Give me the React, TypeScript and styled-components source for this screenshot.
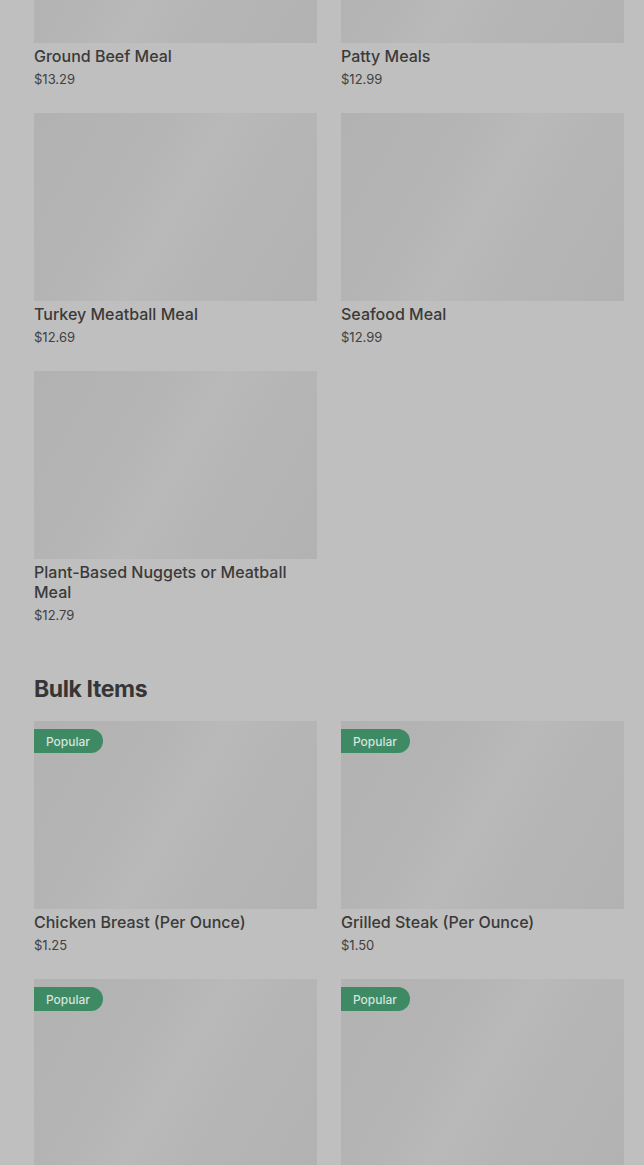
import React from 'react';
import styled, { createGlobalStyle } from 'styled-components';

interface Item {
    name: string;
    price: string;
    popular?: boolean;
}

const meals: Item[] = [
    { name: 'Ground Beef Meal', price: '$13.29' },
    { name: 'Patty Meals', price: '$12.99' },
    { name: 'Turkey Meatball Meal', price: '$12.69' },
    { name: 'Seafood Meal', price: '$12.99' },
    { name: 'Plant-Based Nuggets or Meatball Meal', price: '$12.79' },
];

const bulk: Item[] = [
    { name: 'Chicken Breast (Per Ounce)', price: '$1.25', popular: true },
    { name: 'Grilled Steak (Per Ounce)', price: '$1.50', popular: true },
    { name: 'Ground Turkey (Per Ounce)', price: '$1.25', popular: true },
    { name: 'Salmon (Per Ounce)', price: '$2.25', popular: true },
];

const GlobalStyle = createGlobalStyle`
    html, body {
        margin: 0;
        padding: 0;
        background: #bfbfbf;
        overflow: hidden;
    }
    body {
        font-family: Inter, "Noto Sans", sans-serif;
    }
`;

const Page = styled.div`
    height: 1165px;
    overflow: hidden;
`;

// the menu is scrolled part way down
const Scroller = styled.div`
    margin-top: -145px;
    padding: 0 20px 0 34px;
`;

const Section = styled.section`
    display: flex;
    flex-direction: column;
    padding-bottom: 51px;
`;

const SectionTitle = styled.h2`
    margin: 0 0 18px;
    font-size: 23px;
    line-height: 28px;
    font-weight: 700;
    letter-spacing: -0.4px;
    color: #363636;
`;

const Grid = styled.div`
    display: grid;
    grid-template-columns: 1fr 1fr;
    column-gap: 24px;
    row-gap: 25px;
`;

const Card = styled.div`
    display: flex;
    flex-direction: column;
`;

const Photo = styled.div`
    position: relative;
    height: 188px;
    background: linear-gradient(
        120deg,
        #b2b2b2 0%,
        #b4b4b4 30%,
        #b9b9b9 50%,
        #b5b5b5 70%,
        #b2b2b2 100%
    );
`;

const Badge = styled.span`
    position: absolute;
    top: 8px;
    left: 0;
    height: 24px;
    padding: 0 13px 0 12px;
    display: flex;
    align-items: center;
    border-radius: 0 12px 12px 0;
    background: #3d8a65;
    color: #d6e4dc;
    font-size: 12px;
    font-weight: 500;
`;

const Name = styled.div`
    margin-top: 3px;
    font-size: 16px;
    line-height: 20px;
    font-weight: 500;
    color: #3a3a3a;
`;

const Price = styled.div`
    margin-top: 4px;
    font-size: 13px;
    line-height: 18px;
    color: #414141;
`;

function ItemCard({ item }: { item: Item }) {
    return (
        <Card>
            <Photo>{item.popular && <Badge>Popular</Badge>}</Photo>
            <Name>{item.name}</Name>
            <Price>{item.price}</Price>
        </Card>
    );
}

export default function App() {
    return (
        <Page>
            <GlobalStyle />
            <Scroller>
                <Section>
                    <Grid>
                        {meals.map((m) => (
                            <ItemCard key={m.name} item={m} />
                        ))}
                    </Grid>
                </Section>
                <Section>
                    <SectionTitle>Bulk Items</SectionTitle>
                    <Grid>
                        {bulk.map((m) => (
                            <ItemCard key={m.name} item={m} />
                        ))}
                    </Grid>
                </Section>
            </Scroller>
        </Page>
    );
}
